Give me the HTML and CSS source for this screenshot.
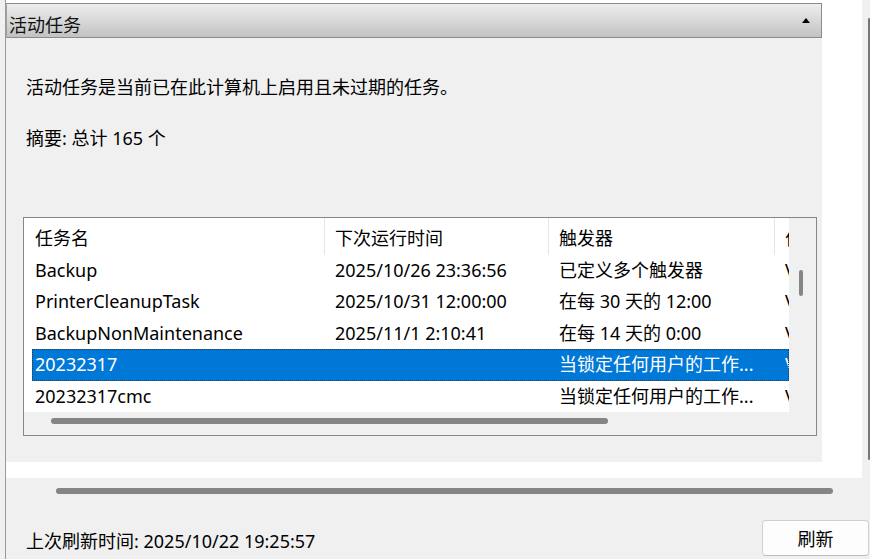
FILE: index.html
```html
<!DOCTYPE html>
<html lang="zh-CN">
<head>
  <meta charset="UTF-8">
  <meta name="viewport" content="width=device-width, initial-scale=1.0">
  <title>活动任务</title>
  <link rel="stylesheet" href="styles.css">
</head>
<body>

<div class="frame">
  <div class="top">
    <div class="pane">
      <div class="section">
        <div class="section-head">
          <span class="section-title">活动任务</span>
          <span class="collapse-arrow"></span>
        </div>
        <div class="section-body">
          <p class="desc">活动任务是当前已在此计算机上启用且未过期的任务。</p>
          <p class="summary">摘要: 总计 165 个</p>

          <!-- task list -->
          <div class="list">
            <div class="list-main">
              <div class="list-view">
                <div class="list-head">
                  <div class="col c1">任务名</div>
                  <div class="col c2">下次运行时间</div>
                  <div class="col c3">触发器</div>
                  <div class="col c4">作者</div>
                </div>
                <div class="row">
                  <div class="cell c1">Backup</div>
                  <div class="cell c2">2025/10/26 23:36:56</div>
                  <div class="cell c3">已定义多个触发器</div>
                  <div class="cell c4">V</div>
                </div>
                <div class="row">
                  <div class="cell c1">PrinterCleanupTask</div>
                  <div class="cell c2">2025/10/31 12:00:00</div>
                  <div class="cell c3">在每 30 天的 12:00</div>
                  <div class="cell c4">V</div>
                </div>
                <div class="row">
                  <div class="cell c1">BackupNonMaintenance</div>
                  <div class="cell c2">2025/11/1 2:10:41</div>
                  <div class="cell c3">在每 14 天的 0:00</div>
                  <div class="cell c4">V</div>
                </div>
                <div class="row selected">
                  <div class="cell c1">20232317</div>
                  <div class="cell c2"></div>
                  <div class="cell c3">当锁定任何用户的工作...</div>
                  <div class="cell c4">V</div>
                </div>
                <div class="row">
                  <div class="cell c1">20232317cmc</div>
                  <div class="cell c2"></div>
                  <div class="cell c3">当锁定任何用户的工作...</div>
                  <div class="cell c4">V</div>
                </div>
              </div>
              <div class="vscroll"><div class="vthumb"></div></div>
            </div>
            <div class="hscroll"><div class="hthumb"></div></div>
          </div>
        </div>
      </div>
    </div>
    <div class="outer-scroll"><div class="outer-thumb"></div></div>
  </div>

  <div class="page-hscroll"><div class="page-hthumb"></div></div>

  <div class="footer">
    <span class="refresh-time">上次刷新时间: 2025/10/22 19:25:57</span>
    <button type="button" class="btn-refresh">刷新</button>
  </div>
</div>

</body>
</html>
```

FILE: styles.css
```css
body {
  margin: 0;
  width: 870px;
  height: 559px;
  overflow: hidden;
  background: #f0f0f0;
  font-family: "Noto Sans", "Noto Sans CJK SC", sans-serif;
  font-size: 18px;
  color: #000;
}
.frame { margin-left: 5px; border-left: 1px solid #9a9a9a; height: 559px; display: flex; flex-direction: column; }
.top { display: flex; height: 478px; }
.pane { width: 856px; background: #fff; padding-top: 3px; box-sizing: border-box; }

/* collapsible section */
.section { width: 816px; }
.section-head {
  height: 35px;
  box-sizing: border-box;
  border: 1px solid #8c8c8c;
  border-left-color: #a0a0a0;
  background: linear-gradient(#eeeeee, #c2c2c2);
  display: flex;
  align-items: flex-end;
  justify-content: space-between;
  padding: 0 11px 0 2px;
}
.section-title { line-height: 24px; color: #111; }
.collapse-arrow {
  align-self: center;
  width: 0;
  height: 0;
  border-left: 4px solid transparent;
  border-right: 4px solid transparent;
  border-bottom: 5px solid #000;
}
.section-body { height: 424px; box-sizing: border-box; background: #f0f0f0; padding: 37px 5px 0 17px; }
.desc { margin: 0; line-height: 24px; padding-left: 3px; }
.summary { margin: 27px 0 0; line-height: 24px; padding-left: 3px; }

/* list view */
.list { margin-top: 67px; width: 794px; height: 219px; box-sizing: border-box; border: 1px solid #828790; background: #fff; }
.list-main { display: flex; height: 194px; }
.list-view { width: 765px; overflow: hidden; }
.list-head { display: flex; height: 36.5px; }
.list-head .col {
  box-sizing: border-box;
  flex: none;
  height: 36.5px;
  padding-top: 3px;
  line-height: 34px;
  padding-left: 10px;
  white-space: nowrap;
  overflow: hidden;
  border-right: 1px solid #e5e5e5;
}
.list-head .c1 { width: 301px; padding-left: 11px; }
.list-head .c2 { width: 224px; }
.list-head .c3 { width: 226px; }
.list-head .c4 { width: 60px; border-right: none; }
.row { display: flex; height: 31.5px; line-height: 31.5px; margin-left: 8px; }
.cell { box-sizing: border-box; flex: none; padding-left: 10px; white-space: nowrap; overflow: hidden; }
.row .c1 { width: 293px; padding-left: 3px; }
.row .c2 { width: 224px; }
.row .c3 { width: 226px; }
.row .c4 { width: 40px; }
.row.selected { background: #0078d7; color: #fff; outline: 1px dotted #3a3a3a; outline-offset: -1px; }
.vscroll { flex: 1; background: #f0f0f0; padding: 52px 0 0 10px; box-sizing: border-box; }
.vthumb { width: 4px; height: 26px; border-radius: 2px; background: #858585; }
.hscroll { height: 23px; box-sizing: border-box; background: #f0f0f0; padding: 6px 0 0 27px; }
.hthumb { width: 557px; height: 6px; border-radius: 3px; background: #858585; }

.outer-scroll { width: 8px; }
.outer-thumb { margin: 18px 0 0 5.5px; width: 2.5px; height: 442px; background: #767676; border-radius: 1px; }

.page-hscroll { height: 42px; box-sizing: border-box; padding: 9.5px 0 0 50px; }
.page-hthumb { width: 777px; height: 6px; border-radius: 3px; background: #858585; }

.footer { display: flex; align-items: center; justify-content: space-between; height: 36px; padding-left: 20px; }
.refresh-time { padding-top: 4px; }
.btn-refresh {
  width: 107px;
  height: 36px;
  margin-right: 1px;
  background: #fdfdfd;
  border: 1px solid #d0d0d0;
  border-bottom-color: #bcbcbc;
  border-radius: 4px;
  font: inherit;
  color: #000;
}
```
